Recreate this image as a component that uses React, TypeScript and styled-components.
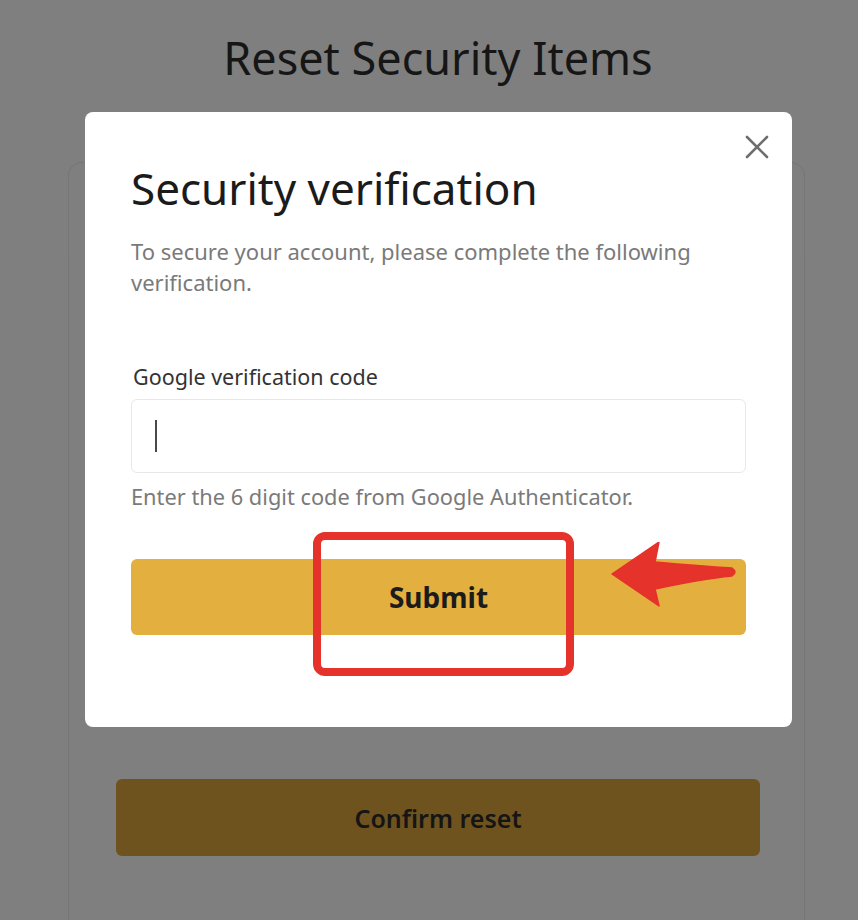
import React from "react";
import styled, { createGlobalStyle } from "styled-components";

const GlobalStyle = createGlobalStyle`
  html, body {
    margin: 0;
    padding: 0;
    background: #7f7f7f;
  }
  body {
    font-family: "Noto Sans", "Liberation Sans", sans-serif;
  }
  * { box-sizing: border-box; }
`;

const Page = styled.div`
  position: relative;
  width: 858px;
  height: 920px;
  overflow: hidden;
  background: #7f7f7f;
  display: flex;
  flex-direction: column;
`;

const PageTitle = styled.h1`
  margin: 30px 0 0;
  padding-left: 18px;
  text-align: center;
  font-size: 45px;
  line-height: 56px;
  font-weight: 400;
  color: #161616;
`;

const BackCard = styled.div`
  margin: 76px 53px 0 68px;
  flex: 1;
  border: 1px solid rgba(0, 0, 0, 0.07);
  border-bottom: none;
  border-radius: 14px 14px 0 0;
  padding: 616px 44px 0 47px;
`;

const ConfirmButton = styled.div`
  height: 77px;
  border-radius: 6px;
  background: #6f531f;
  display: flex;
  align-items: center;
  justify-content: center;
  font-size: 25px;
  font-weight: 600;
  color: #151515;
`;

const Modal = styled.div`
  position: absolute;
  left: 85px;
  top: 112px;
  width: 707px;
  height: 615px;
  background: #ffffff;
  border-radius: 8px;
  padding: 0 46px;
  display: flex;
  flex-direction: column;
`;

const CloseButton = styled.div`
  position: absolute;
  top: 22px;
  right: 22px;
  width: 26px;
  height: 26px;
  display: flex;
  align-items: center;
  justify-content: center;
`;

const ModalTitle = styled.h2`
  margin: 50px 0 0;
  font-size: 44px;
  line-height: 52px;
  font-weight: 400;
  color: #1b1b1b;
`;

const Description = styled.p`
  margin: 22px 0 0;
  font-size: 22px;
  line-height: 31px;
  color: #7a7a7a;
`;

const FieldLabel = styled.div`
  margin: 65px 0 0 2px;
  font-size: 21.5px;
  line-height: 28px;
  color: #333333;
`;

const InputBox = styled.div`
  margin-top: 8px;
  height: 74px;
  border: 1px solid #e6e8ea;
  border-radius: 6px;
  display: flex;
  align-items: center;
  padding-left: 23px;
`;

const Caret = styled.div`
  width: 2px;
  height: 32px;
  background: #4a4a4a;
`;

const HelpText = styled.div`
  margin-top: 10px;
  font-size: 21.8px;
  line-height: 28px;
  color: #7a7a7a;
`;

const SubmitWrap = styled.div`
  position: relative;
  margin-top: 48px;
`;

const SubmitButton = styled.div`
  height: 76px;
  border-radius: 6px;
  background: #e3af3e;
  display: flex;
  align-items: center;
  justify-content: center;
  font-size: 28px;
  font-weight: 700;
  color: #1b1b1b;
`;

const HighlightBox = styled.div`
  position: absolute;
  left: 182px;
  top: -27px;
  width: 261px;
  height: 144px;
  border: 8px solid #e5322a;
  border-radius: 12px;
  pointer-events: none;
`;

const Arrow = styled.svg`
  position: absolute;
  left: 480px;
  top: -17px;
  width: 128px;
  height: 66px;
`;

export default function App() {
  return (
    <>
      <GlobalStyle />
      <Page>
        <PageTitle>Reset Security Items</PageTitle>
        <BackCard>
          <ConfirmButton>Confirm reset</ConfirmButton>
        </BackCard>
        <Modal>
          <CloseButton>
            <svg width="24" height="24" viewBox="0 0 24 24">
              <path d="M2 2 L22 22 M22 2 L2 22" stroke="#6e6e6e" strokeWidth="2.6" strokeLinecap="round" fill="none" />
            </svg>
          </CloseButton>
          <ModalTitle>Security verification</ModalTitle>
          <Description>
            To secure your account, please complete the following verification.
          </Description>
          <FieldLabel>Google verification code</FieldLabel>
          <InputBox>
            <Caret />
          </InputBox>
          <HelpText>Enter the 6 digit code from Google Authenticator.</HelpText>
          <SubmitWrap>
            <SubmitButton>Submit</SubmitButton>
            <HighlightBox />
            <Arrow viewBox="0 0 128 66">
              <path
                d="M1 32 L48 0 L44 20 Q90 24 121 26 Q127 30 121 34 Q90 37 44 47 L48 64 Z"
                fill="#e5322a"
                stroke="#e5322a"
                strokeWidth="1.5"
                strokeLinejoin="round"
              />
            </Arrow>
          </SubmitWrap>
        </Modal>
      </Page>
    </>
  );
}
